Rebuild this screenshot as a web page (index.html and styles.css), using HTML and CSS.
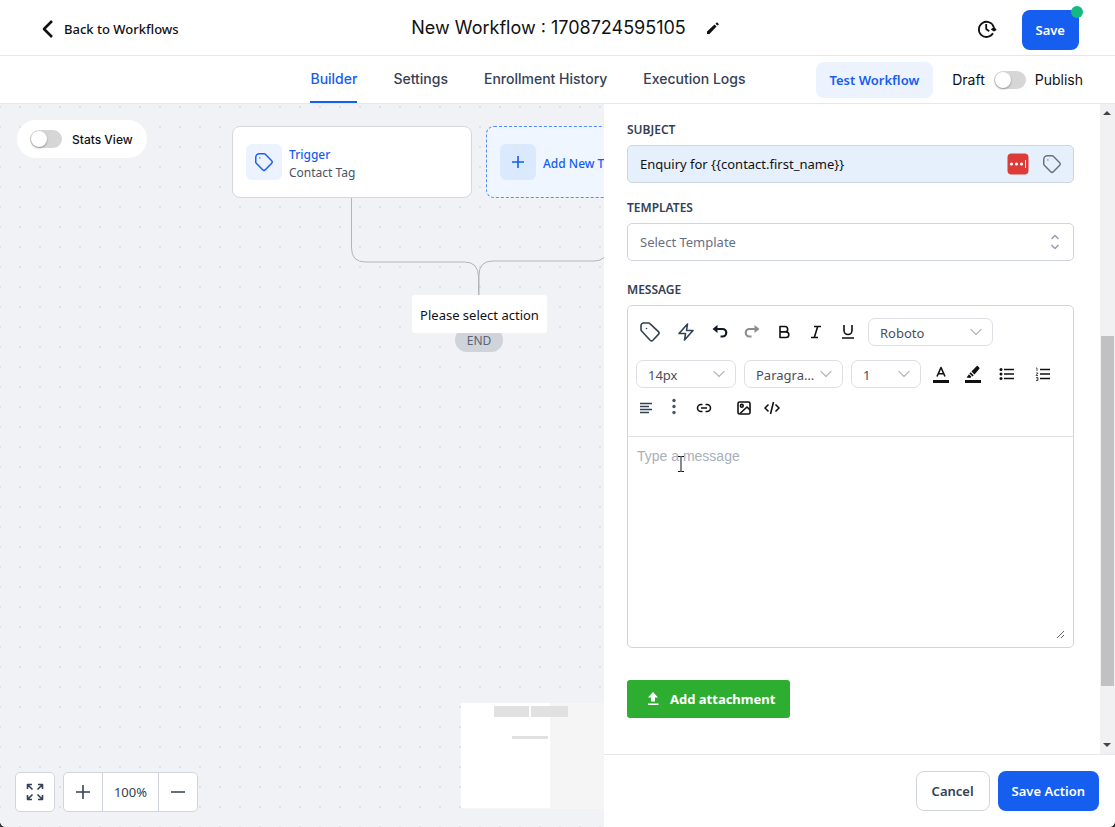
FILE: index.html
```html
<!DOCTYPE html>
<html lang="en">
<head>
  <meta charset="utf-8">
  <title>Workflow Builder</title>
  <link rel="stylesheet" href="styles.css">
</head>
<body>
  <svg class="sprite" aria-hidden="true">
    <symbol id="tag" viewBox="0 0 24 24">
      <path d="M7.500 7.500h.01M7 3h5a2 2 0 0 1 1.414.586l7 7a2 2 0 0 1 0 2.828l-7 7a2 2 0 0 1-2.828 0l-7-7A2 2 0 0 1 3 12V7a4 4 0 0 1 4-4z"/>
    </symbol>
    <symbol id="label" viewBox="0 0 24 24">
      <path d="M8.500 8.500v.01M3 9.500V5.500A2.500 2.500 0 0 1 5.500 3h5a2 2 0 0 1 1.400.6l8.500 8a2 2 0 0 1 0 2.800l-5.500 5.800a2 2 0 0 1-2.800 0L3.600 11a2 2 0 0 1-.6-1.500z"/>
    </symbol>
    <symbol id="chevron" viewBox="0 0 12 12">
      <path d="M1 3.500l5 5 5-5"/>
    </symbol>
  </svg>

  <header class="header">
    <a class="back" href="#">
      <svg width="13" height="20" viewBox="0 0 13 20"><path d="M11 2L3 10l8 8"/></svg>
      Back to Workflows
    </a>
    <div class="title">
      <h1>New Workflow : 1708724595105</h1>
      <button class="icon-btn" aria-label="Rename">
        <svg class="solid" width="14" height="14" viewBox="0 0 14 14"><path d="M1 10.500L8.500 3.500 10.500 5.500 3.500 13H1zM9.500 2.700L11 1.300l2 2-1.500 1.300z"/></svg>
      </button>
    </div>
    <div class="header-actions">
      <button class="icon-btn" aria-label="Version history">
        <svg class="history" width="20" height="20" viewBox="0 0 20 20"><path d="M16 14.300A7.600 7.600 0 1 1 16.700 8M9.200 5v5l3 2.200"/><path class="solid" d="M13.800 10.500l3.300-3 2.600 3.400-2.700 1.600z"/></svg>
      </button>
      <button class="btn primary save">Save<span class="dot"></span></button>
    </div>
  </header>

  <nav class="navbar">
    <div class="tabs">
      <a class="tab active" href="#">Builder</a>
      <a class="tab" href="#">Settings</a>
      <a class="tab" href="#">Enrollment History</a>
      <a class="tab" href="#">Execution Logs</a>
    </div>
    <div class="nav-actions">
      <button class="btn test">Test Workflow</button>
      <label class="publish">Draft <input class="switch" type="checkbox"> Publish</label>
    </div>
  </nav>

  <main class="main">
    <section class="canvas">
      <label class="stats"><input class="switch" type="checkbox"> Stats View</label>

      <svg class="edges" width="640" height="300" viewBox="0 0 640 300">
        <path d="M351.500 94v50q0 14 14 14h99q14 0 14 15v18M607 144q0 13-13 13H493q-14 0-14 14v20"/>
      </svg>

      <div class="node trigger">
        <span class="node-icon"><svg width="22" height="22"><use href="#tag"/></svg></span>
        <div class="node-body">
          <div class="node-title">Trigger</div>
          <div class="node-text">Contact Tag</div>
        </div>
      </div>
      <div class="node add-trigger">
        <span class="node-icon"><svg width="14" height="14" viewBox="0 0 14 14"><path d="M7 1v12M1 7h12"/></svg></span>
        <div class="node-body node-title">Add New Trigger</div>
      </div>
      <div class="end">END</div>
      <div class="select-action">Please select action</div>

      <div class="minimap">
        <svg width="143" height="106" viewBox="0 0 143 106">
          <path fill="#f5f5f5" d="M0 0h143v106H0z"/>
          <path fill="#fff" d="M0 0h89v105H0z"/>
          <path fill="#e1e1e1" d="M33 3h35v11H33zM70 3h37v11H70zM51 33h36v3H51z"/>
        </svg>
      </div>

      <div class="controls">
        <button class="control fit" aria-label="Fit view">
          <svg width="18" height="18" viewBox="0 0 18 18"><path d="M1.500 6V1.500H6M2 2l4.500 4.500M12 1.500h4.500V6M16 2l-4.500 4.500M1.500 12v4.500H6M2 16l4.500-4.500M12 16.500h4.500V12M16 16l-4.500-4.500"/></svg>
        </button>
        <div class="zoom">
          <button class="control" aria-label="Zoom in"><svg width="14" height="14" viewBox="0 0 14 14"><path d="M7 0v14M0 7h14"/></svg></button>
          <span class="zoom-value">100%</span>
          <button class="control" aria-label="Zoom out"><svg width="14" height="14" viewBox="0 0 14 14"><path d="M0 7h14"/></svg></button>
        </div>
      </div>
    </section>

    <aside class="panel">
      <div class="panel-scroll">
        <form class="form">
          <label class="label" for="subject">SUBJECT</label>
          <div class="input-wrap">
            <input class="field subject" id="subject" type="text" value="Enquiry for {{contact.first_name}}">
            <div class="input-icons">
              <svg width="22" height="22" viewBox="0 0 22 22"><rect width="21" height="21" x=".5" y=".5" rx="4" fill="#dc3b38"/><g fill="#fff"><circle cx="4.500" cy="11" r="1.600"/><circle cx="9.500" cy="11" r="1.600"/><circle cx="14.500" cy="11" r="1.600"/><path d="M18 7h1v8h-1z"/></g></svg>
              <button class="icon-btn" type="button" aria-label="Insert field"><svg width="22" height="22"><use href="#tag"/></svg></button>
            </div>
          </div>

          <label class="label" for="template">TEMPLATES</label>
          <div class="select-wrap template">
            <select class="field" id="template"><option>Select Template</option></select>
            <svg width="10" height="16" viewBox="0 0 10 16"><path d="M1.500 5L5 1.500 8.500 5M1.500 11L5 14.500 8.500 11"/></svg>
          </div>

          <label class="label" for="message">MESSAGE</label>
          <div class="editor">
            <div class="toolbar">
              <div class="tools">
                <button class="tool wide" type="button" aria-label="Tag"><svg class="slate" width="24" height="24"><use href="#label"/></svg></button>
                <button class="tool wide" type="button" aria-label="Triggers"><svg class="slate" width="18" height="20" viewBox="0 0 18 20"><path d="M10.500 2L2 11.500h6.500L7.500 18 16 8.500H9.500z"/></svg></button>
                <button class="tool" type="button" aria-label="Undo"><svg class="thick" width="16" height="16" viewBox="0 0 16 16"><path d="M4 5h6.500a3.700 3.700 0 0 1 0 7.500H8.500"/><path class="solid" d="M.5 5L5.500 1v8z"/></svg></button>
                <button class="tool" type="button" aria-label="Redo"><svg class="thick gray" width="16" height="16" viewBox="0 0 16 16"><path d="M12 5H5.500a3.700 3.700 0 0 0 0 7.500h2"/><path class="solid" d="M15.500 5l-5-4v8z"/></svg></button>
                <button class="tool" type="button" aria-label="Bold"><svg width="14" height="14" viewBox="0 0 14 14"><path d="M3 1.500h5a2.700 2.700 0 0 1 0 5.400H3zM3 6.900h6a2.800 2.800 0 0 1 0 5.600H3z"/></svg></button>
                <button class="tool" type="button" aria-label="Italic"><svg width="14" height="14" viewBox="0 0 14 14"><path d="M5 1.500h7M2 12.500h7M8.700 1.500l-3.400 11"/></svg></button>
                <button class="tool" type="button" aria-label="Underline"><svg width="14" height="16" viewBox="0 0 14 16"><path d="M3 1v5.500a4 4 0 0 0 8 0V1M1 14h12"/></svg></button>
                <div class="select-wrap font">
                  <select aria-label="Font"><option>Roboto</option></select>
                  <svg width="12" height="12"><use href="#chevron"/></svg>
                </div>
              </div>
              <div class="tools selects">
                <div class="select-wrap size">
                  <select aria-label="Font size"><option>14px</option></select>
                  <svg width="12" height="12"><use href="#chevron"/></svg>
                </div>
                <div class="select-wrap block">
                  <select aria-label="Block type"><option>Paragraph</option></select>
                  <svg width="12" height="12"><use href="#chevron"/></svg>
                </div>
                <div class="select-wrap line">
                  <select aria-label="Line height"><option>1</option></select>
                  <svg width="12" height="12"><use href="#chevron"/></svg>
                </div>
                <button class="tool" type="button" aria-label="Text color"><svg width="16" height="18" viewBox="0 0 16 18"><path d="M4 11.500L8 2.500l4 9M5.300 8.800h5.400"/><path class="solid" d="M0 15h16v3H0z"/></svg></button>
                <button class="tool" type="button" aria-label="Highlight"><svg class="solid" width="16" height="18" viewBox="0 0 16 18"><path d="M0 15h16v3H0zM1.500 12.500L4 9.200l2.500 2.500-1.300 1.300zM4.500 8.500l1.200-1.200 3 3-1.200 1.200zM6.500 6.500L11.500 1.300a1 1 0 0 1 1.500 0l1.200 1.200a1 1 0 0 1 0 1.500L9.500 9.500z"/></svg></button>
                <button class="tool wide" type="button" aria-label="Bulleted list"><svg class="thin" width="16" height="14" viewBox="0 0 16 14"><path d="M5 2.500h10M5 7h10M5 11.500h10"/><g class="solid"><circle cx="2" cy="2.500" r="1.500"/><circle cx="2" cy="7" r="1.500"/><circle cx="2" cy="11.500" r="1.500"/></g></svg></button>
                <button class="tool wide" type="button" aria-label="Numbered list"><svg class="thin" width="16" height="14" viewBox="0 0 16 14"><path d="M5 2.500h10M5 7h10M5 11.500h10"/><path class="hair" d="M1 1h1v3M1 6h2L1 8.500h2M1 10.500h2v3H1M1.500 12H3"/></svg></button>
              </div>
              <div class="tools">
                <button class="tool narrow" type="button" aria-label="Align"><svg class="slate" width="14" height="14" viewBox="0 0 14 14"><path d="M1 2.500h12M1 5.500h9M1 8.500h12M1 11.500h9"/></svg></button>
                <button class="tool narrow" type="button" aria-label="More"><svg class="dots" width="4" height="20" viewBox="0 0 4 20"><circle cx="2" cy="2.500" r="1.700"/><circle cx="2" cy="8.500" r="1.700"/><circle cx="2" cy="14.500" r="1.700"/></svg></button>
                <button class="tool" type="button" aria-label="Link"><svg width="16" height="10" viewBox="0 0 16 10"><path d="M6.500 1.500H5a3.500 3.500 0 0 0 0 7h1.500M9.500 1.500H11a3.500 3.500 0 0 1 0 7H9.500M5 5h6"/></svg></button>
                <button class="tool image" type="button" aria-label="Image"><svg width="14" height="14" viewBox="0 0 14 14"><rect x="1" y="1" width="12" height="12" rx="1.500"/><circle cx="4.800" cy="4.800" r="1.400"/><path d="M3 12.500l7-6.500 3 3"/></svg></button>
                <button class="tool code" type="button" aria-label="Source code"><svg width="16" height="14" viewBox="0 0 16 14"><path d="M4.500 3.500L1 7l3.500 3.500M11.500 3.500L15 7l-3.500 3.500M9.500 1l-3 12"/></svg></button>
              </div>
            </div>
            <textarea id="message" placeholder="Type a message"></textarea>
            <svg class="cursor" width="8" height="16" viewBox="0 0 8 16"><path d="M1 .5h2.500l.5.500.5-.5H7M4 1v14M1 15.500h2.500l.5-.5.500.5H7"/></svg>
          </div>

          <button class="attach" type="button">
            <svg class="solid" width="12" height="14" viewBox="0 0 12 14"><path d="M6 0l5 5.500H8v4H4v-4H1zM1 11.500h10.500v1.500H1z"/></svg>
            Add attachment
          </button>
        </form>
        <div class="scrollbar" aria-hidden="true">
          <span class="arrow up"></span>
          <span class="thumb"></span>
          <span class="arrow down"></span>
        </div>
      </div>
      <footer class="panel-footer">
        <button class="btn cancel">Cancel</button>
        <button class="btn primary">Save Action</button>
      </footer>
    </aside>
  </main>
</body>
</html>
```
FILE: styles.css
```css
* {
  box-sizing: border-box;
}
html {
  overflow: hidden;
  background: #333;
}
body {
  margin: 0;
  height: 100vh;
  display: flex;
  flex-direction: column;
  overflow: hidden;
  border-radius: 0 0 6px 6px;
  font-family: "Noto Sans", sans-serif;
  font-size: 14px;
  color: #111;
  background: #fff;
}
button, input, select, textarea {
  font: inherit;
  color: inherit;
}
button {
  padding: 0;
  border: 0;
  background: none;
}
a {
  color: inherit;
  text-decoration: none;
}
svg {
  display: block;
  flex: none;
  fill: none;
  stroke: currentColor;
  stroke-width: 1.6px;
  stroke-linejoin: round;
}
symbol path {
  stroke-linecap: round;
}
.solid {
  fill: currentColor;
  stroke: none;
}
.sprite {
  position: absolute;
  width: 0;
  height: 0;
}
.icon-btn {
  display: flex;
}

/* header */
.header {
  display: flex;
  align-items: center;
  justify-content: space-between;
  height: 56px;
  padding: 3px 36px 0 41px;
  border-bottom: 1px solid #e5e7eb;
}
.back {
  display: flex;
  align-items: center;
  gap: 10px;
  font-size: 13px;
  font-weight: 500;
}
.back svg {
  stroke-width: 2.6px;
}
.title {
  display: flex;
  align-items: center;
  gap: 20px;
  margin: 0 24px 2px 0;
}
.title h1 {
  margin: 0;
  font: 400 18px/24px Inter, sans-serif;
}
.header-actions {
  display: flex;
  align-items: center;
  gap: 25px;
}
.history {
  stroke-width: 1.8px;
}
.btn {
  height: 40px;
  padding: 0 14px;
  border-radius: 8px;
  font-weight: 600;
  font-size: 13px;
}
.primary {
  color: #fff;
  background: #155eef;
}
.save {
  position: relative;
  margin-top: 2px;
}
.save .dot {
  position: absolute;
  top: -4px;
  right: -4px;
  width: 12px;
  height: 12px;
  border-radius: 50%;
  background: #12b981;
}

/* tabs */
.navbar {
  display: flex;
  justify-content: flex-end;
  gap: 70px;
  height: 48px;
  padding-right: 32px;
  border-bottom: 1px solid #e5e7eb;
}
.tabs {
  display: flex;
  gap: 36px;
  font-family: Inter, sans-serif;
  font-weight: 500;
  color: #344054;
}
.tab {
  display: flex;
  align-items: center;
  border-bottom: 2px solid transparent;
}
.tab.active {
  color: #155eef;
  border-color: #155eef;
}
.nav-actions {
  display: flex;
  align-items: center;
  gap: 19px;
}
.test {
  height: 36px;
  color: #155eef;
  background: #edf2ff;
}
.publish, .stats {
  display: flex;
  align-items: center;
  gap: 9px;
  font-family: Inter, sans-serif;
}
.switch {
  appearance: none;
  display: flex;
  width: 32px;
  height: 18px;
  margin: 0;
  padding: 1px;
  border-radius: 9px;
  background: #d6d6d6;
}
.switch::before {
  content: "";
  width: 16px;
  height: 16px;
  border-radius: 50%;
  background: #fff;
  box-shadow: 0 1px 2px rgba(0, 0, 0, .35);
}

/* canvas */
.main {
  display: flex;
  flex: 1;
  min-height: 0;
}
.canvas {
  position: relative;
  flex: 1;
  min-width: 0;
  overflow: hidden;
  background: #f1f2f6 radial-gradient(circle, #e0e1e5 1px, transparent 1px) 10px -7px / 20px 20px;
}
.stats {
  position: absolute;
  top: 16px;
  left: 17px;
  height: 38px;
  padding: 0 14px 0 13px;
  gap: 10px;
  border-radius: 19px;
  background: #fff;
  font-size: 12px;
  font-weight: 500;
}
.edges {
  position: absolute;
  top: 0;
  left: 0;
  color: #b0b4bb;
  stroke-width: 1px;
}
.node {
  position: absolute;
  top: 22px;
  display: flex;
  align-items: center;
  width: 240px;
  height: 72px;
  padding: 0 13px;
  gap: 7px;
  border: 1px solid #d6d8dd;
  border-radius: 8px;
  background: #fff;
  font-size: 12px;
  line-height: 18px;
}
.trigger {
  left: 232px;
}
.add-trigger {
  left: 486px;
  border: 1px dashed #528bff;
  background: #eff6ff;
}
.node-icon {
  display: grid;
  place-items: center;
  width: 36px;
  height: 36px;
  border-radius: 6px;
  background: #edf2ff;
  color: #155eef;
}
.add-trigger .node-icon {
  background: #dbe9fe;
}
.node-body {
  padding-top: 3px;
}
.node-title {
  color: #155eef;
  font-weight: 500;
}
.node-text {
  color: #475467;
}
.end {
  position: absolute;
  top: 224px;
  left: 455px;
  width: 48px;
  height: 24px;
  border-radius: 12px;
  background: #d0d3da;
  color: #5b6370;
  font-size: 12px;
  line-height: 26px;
  text-align: center;
}
.select-action {
  position: absolute;
  top: 191px;
  left: 412px;
  width: 135px;
  height: 38px;
  border-radius: 3px;
  background: #fff;
  font-size: 13px;
  line-height: 40px;
  text-align: center;
  white-space: nowrap;
}
.minimap {
  position: absolute;
  right: 0;
  bottom: 18px;
}
.minimap svg {
  stroke: none;
}
.controls {
  position: absolute;
  left: 15px;
  bottom: 15px;
  display: flex;
  gap: 8px;
  color: #344054;
}
.control {
  display: grid;
  place-items: center;
  width: 38px;
  height: 38px;
}
.fit, .zoom {
  height: 40px;
  border: 1px solid #d0d5dd;
  border-radius: 5px;
  background: #fff;
}
.fit {
  width: 40px;
}
.zoom {
  display: flex;
}
.zoom-value {
  width: 57px;
  border: solid #d0d5dd;
  border-width: 0 1px;
  font-size: 13px;
  line-height: 38px;
  text-align: center;
}

/* action panel */
.panel {
  display: flex;
  flex-direction: column;
  width: 511px;
  background: #fff;
}
.panel-scroll {
  display: flex;
  flex: 1;
  min-height: 0;
}
.form {
  flex: 1;
  min-width: 0;
  padding: 18px 26px 0 23px;
}
.label {
  display: block;
  margin-bottom: 7px;
  font-size: 12px;
  font-weight: 600;
  line-height: 16px;
  color: #344054;
}
.field {
  display: block;
  width: 100%;
  height: 38px;
  padding: 0 12px;
  border: 1px solid #d0d5dd;
  border-radius: 5px;
  background: #fff;
  font-size: 13px;
}
.input-wrap {
  position: relative;
  margin-bottom: 17px;
}
.subject {
  padding-right: 76px;
  background: #e6f0fd;
}
.input-icons {
  position: absolute;
  top: 8px;
  right: 11px;
  display: flex;
  align-items: flex-start;
  gap: 12px;
}
.input-icons > svg {
  stroke: none;
}
.input-icons .icon-btn {
  color: #667085;
}
.select-wrap {
  position: relative;
}
.select-wrap select {
  appearance: none;
  text-overflow: ellipsis;
}
.select-wrap svg {
  position: absolute;
  top: 50%;
  right: 11px;
  translate: 0 -50%;
  color: #b5b9c0;
  stroke-width: 1.2px;
  pointer-events: none;
}
.template {
  margin-bottom: 21px;
}
.template select {
  color: #667085;
}
.template svg {
  right: 14px;
  color: #98a2b3;
  stroke-width: 1.6px;
}
.editor {
  position: relative;
  height: 343px;
  display: flex;
  flex-direction: column;
  border: 1px solid #d0d5dd;
  border-radius: 5px;
}
.toolbar {
  height: 131px;
  padding: 12px 4px;
  border-bottom: 1px solid #e0e2e7;
}
.tools {
  display: flex;
  align-items: center;
  height: 28px;
}
.selects {
  margin: 14px 0 6px;
  padding-left: 4px;
}
.tool {
  display: grid;
  place-items: center;
  width: 32px;
  height: 28px;
}
.wide {
  width: 36px;
}
.narrow {
  width: 28px;
}
.image {
  margin-left: 8px;
}
.code {
  width: 24px;
}
.slate {
  color: #344054;
}
.thick {
  color: #101828;
  stroke-width: 2.2px;
}
.gray {
  color: #8b8d91;
}
.thin {
  stroke-width: 1.4px;
}
.hair {
  stroke-width: .7px;
}
.dots {
  fill: #475467;
  stroke: none;
}
.tools select {
  display: block;
  width: 100%;
  height: 28px;
  padding: 1px 24px 0 11px;
  border: 1px solid #dcdfe4;
  border-radius: 7px;
  background: #fff;
  font-size: 13px;
  color: #4a4f58;
}
.font {
  width: 125px;
  margin-left: 4px;
}
.size, .block {
  width: 100px;
  margin-right: 8px;
}
.block {
  width: 99px;
}
.line {
  width: 70px;
  margin-right: 4px;
}
.editor textarea {
  flex: 1;
  margin: 0 8px 8px 0;
  padding: 9px 0 0 9px;
  border: 0;
  outline: 0;
  resize: vertical;
  font: 14px/20px "Liberation Sans", sans-serif;
}
.editor textarea::placeholder {
  color: #a9afbb;
}
.cursor {
  position: absolute;
  top: 150px;
  left: 49px;
  stroke-width: 1px;
}
.attach {
  display: flex;
  align-items: center;
  gap: 11px;
  height: 38px;
  margin-top: 32px;
  padding: 0 15px 0 20px;
  border-radius: 3px;
  background: #2eae31;
  color: #fff;
  font-size: 13px;
  font-weight: 700;
}
.scrollbar {
  display: flex;
  flex-direction: column;
  align-items: center;
  width: 15px;
  padding: 7px 1px 7px 0;
  background: #f1f1f3;
}
.arrow {
  border: 4px solid transparent;
}
.up {
  border-top: 0;
  border-bottom-color: #444;
}
.down {
  border-bottom: 0;
  border-top-color: #444;
  margin-top: auto;
}
.thumb {
  width: 13px;
  height: 55%;
  margin-top: 221px;
  background: #c1c1c1;
}
.panel-footer {
  display: flex;
  justify-content: flex-end;
  gap: 8px;
  height: 73px;
  padding: 16px;
  border-top: 1px solid #e5e7eb;
}
.cancel {
  padding: 0 15px;
  border: 1px solid #d0d5dd;
  color: #344054;
}
```
